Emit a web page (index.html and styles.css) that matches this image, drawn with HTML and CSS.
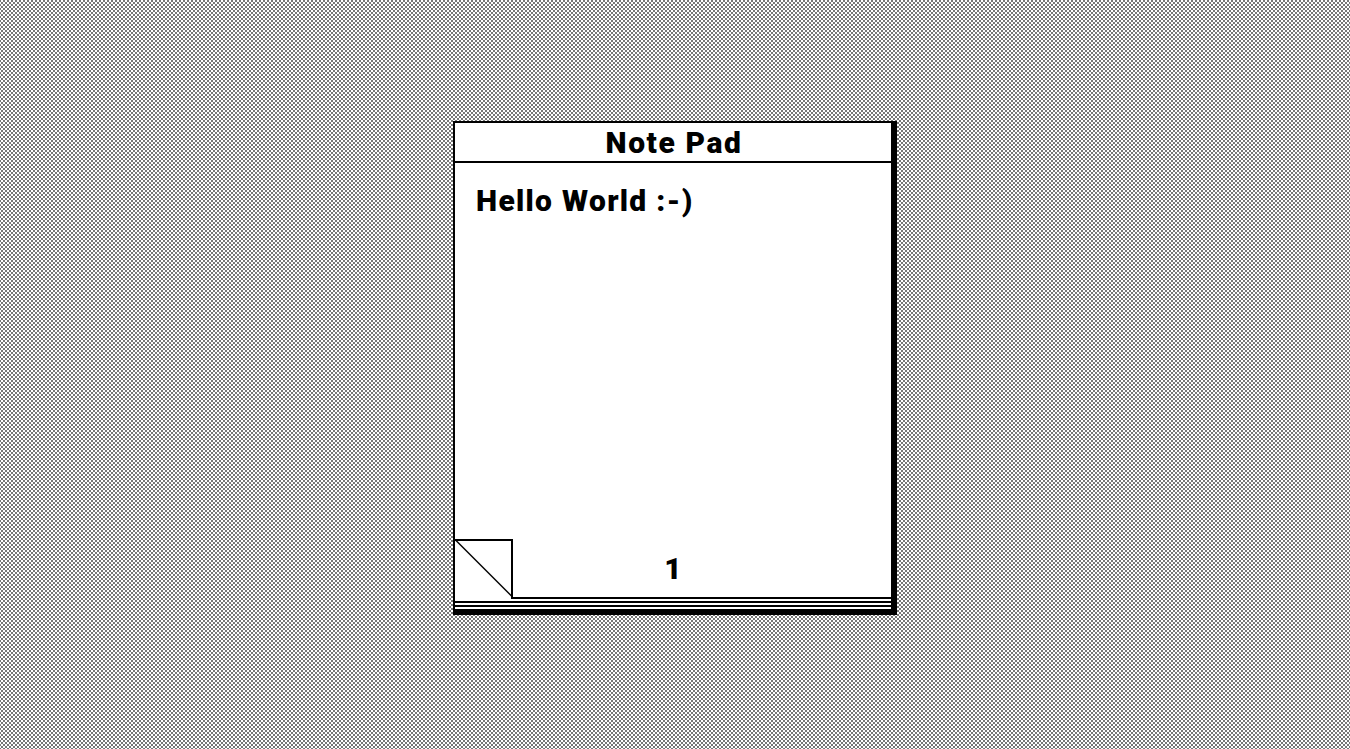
FILE: index.html
```html
<!DOCTYPE html>
<html lang="en">
<head>
<meta charset="utf-8">
<title>Note Pad</title>
<link rel="stylesheet" href="styles.css">
</head>
<body>
<main class="notepad">
  <header class="title-bar"><h1 class="title">Note Pad</h1></header>
  <section class="page">
    <p class="note">Hello World <span class="smiley">:-)</span></p>
    <footer class="page-footer">
      <svg class="fold" width="58" height="60" viewBox="0 0 58 60">
        <path d="M0 2H57V60" fill="none" stroke="#000" stroke-width="2"/>
        <path d="M0 1.5L57 58.5" fill="none" stroke="#000" stroke-width="1.4"/>
      </svg>
      <div class="page-edge"><span class="page-number">1</span></div>
    </footer>
  </section>
  <div class="stack"></div>
</main>
</body>
</html>
```
FILE: styles.css
```css
* { box-sizing: border-box; }

body {
  margin: 0;
  height: 100vh;
  display: flex;
  justify-content: center;
  align-items: flex-start;
  padding-top: 121px;
  overflow: hidden;
  background: repeating-conic-gradient(#777 0 25%, #fff 0 50%) 1px 0 / 4px 4px;
  color: #000;
  font: 900 30px/36px Roboto, "Open Sans", sans-serif;
}

.notepad {
  width: 444px;
  height: 494px;
  display: flex;
  flex-direction: column;
  border: 2px solid #000;
  border-right-width: 6px;
  border-bottom-width: 6px;
  background: #fff;
}

.title-bar {
  height: 40px;
  flex: none;
  border-bottom: 2px solid #000;
  text-align: center;
}

.title {
  margin: 0;
  padding: 2px 0 0 2px;
  font: inherit;
  letter-spacing: 1.6px;
}

.page {
  flex: 1;
  display: flex;
  flex-direction: column;
  justify-content: space-between;
}

.note {
  margin: 0;
  padding: 20px 20px 0 21px;
  letter-spacing: 1.3px;
}

.smiley { letter-spacing: 1.5px; }

.page-footer {
  display: flex;
  height: 61px;
}

.fold {
  flex: none;
  display: block;
}

.page-edge {
  flex: 1;
  height: 61px;
  margin-left: -2px;
  padding: 13px 56px 0 0;
  border-bottom: 2px solid #000;
  text-align: center;
}

.stack {
  height: 10px;
  flex: none;
  background: linear-gradient(#fff 2px, #000 2px 4px, #fff 4px 6px, #000 6px 8px, #fff 8px);
}
```
